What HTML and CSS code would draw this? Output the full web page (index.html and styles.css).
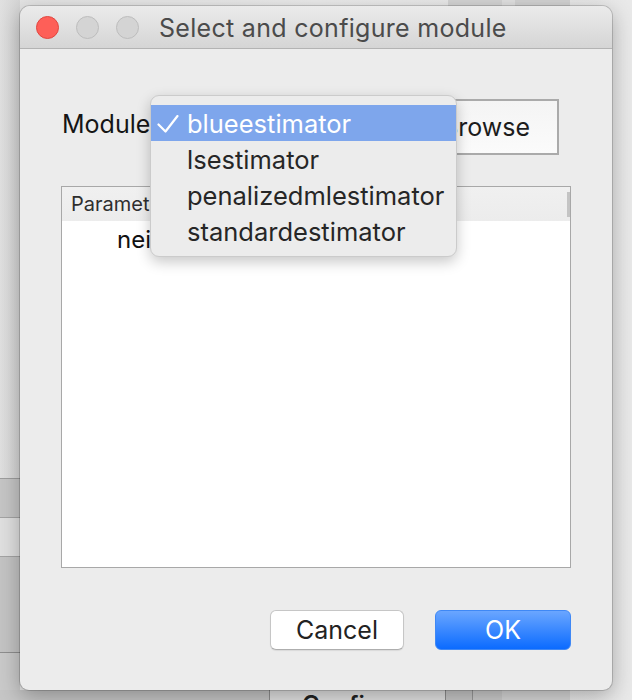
FILE: index.html
```html
<!DOCTYPE html>
<html>
<head>
<meta charset="utf-8">
<link rel="stylesheet" href="styles.css">
</head>
<body>
<div class="desktop">
  <div class="bg-top">
    <div class="bt a"></div><div class="bt b"></div><div class="bt c"></div>
  </div>
  <div class="bg-left">
    <div class="band b1"></div>
    <div class="band b2"></div>
    <div class="band b3"></div>
    <div class="band b4"></div>
    <div class="band b5"></div>
  </div>
  <div class="bg-bottom">
    <div class="bb c1"></div>
    <div class="bb c2"><span class="bb-text">Configure</span></div>
    <div class="bb c3"></div>
    <div class="bb c4"></div>
    <div class="bb c5"></div>
  </div>

  <div class="window">
    <div class="titlebar">
      <span class="light red"></span>
      <span class="light"></span>
      <span class="light"></span>
      <span class="title">Select and configure module</span>
    </div>
    <div class="content">
      <div class="module-row">
        <span class="label">Module:</span>
        <button class="browse">Browse</button>
      </div>
      <div class="table">
        <div class="thead">
          <span class="th">Parameter</span>
          <span class="th-edge"></span>
        </div>
        <div class="tbody">
          <div class="tr"><span class="cell">neighbours</span></div>
        </div>
      </div>
      <div class="actions">
        <button class="btn cancel">Cancel</button>
        <button class="btn ok">OK</button>
      </div>
    </div>

    <div class="popup">
      <div class="item selected">
        <svg class="check" width="22" height="18" viewBox="0 0 22 18"><path d="M1.5 9.5 L8.5 16.5 L20.5 1" fill="none" stroke="#fff" stroke-width="2.2" stroke-linecap="round" stroke-linejoin="round"/></svg>
        <span>blueestimator</span>
      </div>
      <div class="item"><span>lsestimator</span></div>
      <div class="item"><span>penalizedmlestimator</span></div>
      <div class="item"><span>standardestimator</span></div>
    </div>
  </div>
</div>
</body>
</html>
```

FILE: styles.css
```css
* { box-sizing: border-box; }
html, body { margin: 0; padding: 0; }
body {
  width: 632px;
  height: 700px;
  overflow: hidden;
  background: linear-gradient(90deg, #e4e4e4 0%, #ededed 50%, #e9e9e9 100%);
  font-family: "Inter", "Liberation Sans", sans-serif;
}
.desktop {
  position: relative;
  width: 632px;
  height: 700px;
  padding: 6px 20px 0 20px;
}

/* background windows */
.bg-top { position: absolute; top: 0; left: 448px; height: 6px; display: flex; }
.bt { height: 6px; }
.bt.a { width: 54px; background: #d6d6d6; }
.bt.b { width: 13px; background: #e2e2e2; }
.bt.c { width: 55px; background: #d4d4d4; }

.bg-left { position: absolute; left: 0; top: 0; width: 20px; height: 700px; display: flex; flex-direction: column; }
.band { width: 20px; }
.band.b1 { height: 478px; background: linear-gradient(90deg, #e0e0e0, #d6d6d6); }
.band.b2 { height: 39px; background: #c6c6c6; border-top: 1px solid #9e9e9e; }
.band.b3 { height: 39px; background: #e0e0e0; border-top: 1px solid #a4a4a4; }
.band.b4 { height: 96px; background: #c4c4c4; border-top: 1px solid #a4a4a4; }
.band.b5 { height: 48px; background: #cacaca; border-top: 1px solid #8f8f8f; }

.bg-bottom { position: absolute; left: 0; top: 690px; height: 10px; display: flex; }
.bb { height: 10px; }
.bb.c1 { width: 270px; background: #c6c6c6; border-right: 1px solid #8e8e8e; }
.bb.c2 { width: 176px; background: #e2e2e2; border-right: 1px solid #8e8e8e; overflow: hidden; position: relative; }
.bb.c3 { width: 27px; background: #c8c8c8; border-right: 1px solid #9a9a9a; }
.bb.c4 { width: 29px; background: #cdcdcd; }
.bb.c5 { width: 68px; background: #d8d8d8; }
.bb-text { position: absolute; left: 32px; top: 3px; font-size: 24px; line-height: 24px; font-weight: 600; color: #222; }

/* window */
.window {
  position: relative;
  z-index: 2;
  width: 592px;
  height: 684px;
  background: #ececec;
  border-radius: 10px 10px 9px 9px;
  box-shadow: 0 0 0 1px rgba(0,0,0,0.16), 0 6px 22px rgba(0,0,0,0.3);
  display: flex;
  flex-direction: column;
}
.titlebar {
  height: 43px;
  flex: none;
  display: flex;
  align-items: center;
  padding-left: 16px;
  background: linear-gradient(#ebebeb, #d5d5d5);
  border-bottom: 1px solid #b3b3b3;
  border-radius: 10px 10px 0 0;
}
.light {
  width: 23px;
  height: 23px;
  border-radius: 50%;
  background: #d4d4d4;
  border: 1px solid #bdbdbd;
  margin-right: 17px;
  flex: none;
}
.light.red { background: #fe5f58; border-color: #e1463f; }
.title {
  margin-left: 3px;
  margin-top: 1px;
  font-size: 25px;
  color: #4b4b4b;
  letter-spacing: 0.3px;
}

.content {
  flex: 1;
  display: flex;
  flex-direction: column;
  padding: 50px 41px 0 41px;
}
.module-row {
  display: flex;
  align-items: flex-start;
  height: 56px;
}
.label {
  margin-left: 1px;
  margin-top: 10px;
  font-size: 25px;
  line-height: 30px;
  color: #151515;
}
.browse {
  margin-left: auto;
  margin-right: 12px;
  width: 150px;
  height: 56px;
  font-family: inherit;
  font-size: 25px;
  padding: 0 0 0 4px;
  color: #1c1c1c;
  background: linear-gradient(#f4f4f4, #fbfbfb);
  border: 2px solid #aaaaaa;
}

.table {
  margin-top: 31px;
  height: 382px;
  border: 1px solid #a8a8a8;
  background: #fff;
  display: flex;
  flex-direction: column;
}
.thead {
  height: 34px;
  flex: none;
  display: flex;
  align-items: center;
  background: linear-gradient(#f0f0f0, #ececec);
  padding-left: 9px;
}
.th { font-size: 20px; color: #2e2e2e; }
.th-edge {
  margin-left: auto;
  width: 3px;
  height: 25px;
  background: #c4c4c4;
}
.tr {
  height: 36px;
  display: flex;
  align-items: center;
  padding-left: 55px;
  font-size: 24px;
  color: #111;
}

.actions {
  margin-top: 42px;
  display: flex;
  justify-content: flex-end;
}
.btn {
  height: 40px;
  font-family: inherit;
  font-size: 25px;
  border-radius: 6px;
  padding: 0;
}
.btn.cancel {
  width: 134px;
  margin-right: 31px;
  background: #fff;
  color: #222;
  border: 1px solid #c6c6c6;
  border-bottom-color: #aeaeae;
  box-shadow: 0 1px 1px rgba(0,0,0,0.08);
}
.btn.ok {
  width: 136px;
  background: linear-gradient(#6aa6ff, #0b6bff);
  color: #fff;
  border: 1px solid #3f88f5;
}

/* dropdown popup */
.popup {
  position: absolute;
  left: 130px;
  top: 89px;
  width: 307px;
  height: 162px;
  padding: 9px 0;
  background: #ececec;
  border: 1px solid #cbcbcb;
  border-radius: 9px;
  box-shadow: 0 5px 14px rgba(0,0,0,0.22);
  z-index: 5;
}
.item {
  height: 36px;
  display: flex;
  align-items: center;
  padding-left: 36px;
  position: relative;
  font-size: 25.5px;
  color: #262626;
}
.item.selected {
  background: #7ea6ec;
  color: #fff;
}
.check {
  position: absolute;
  left: 6px;
  top: 10px;
}
```
